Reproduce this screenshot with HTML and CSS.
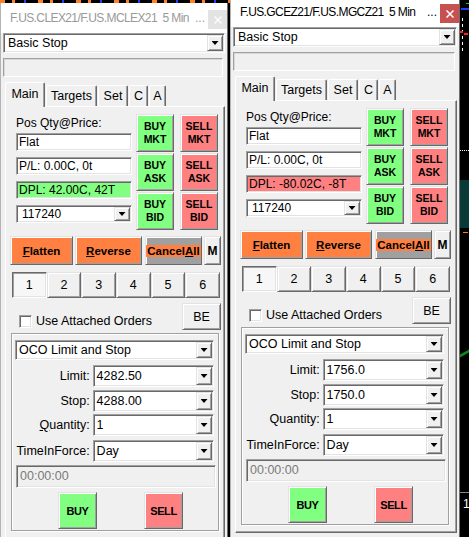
FILE: index.html
```html
<!DOCTYPE html>
<html>
<head>
<meta charset="utf-8">
<link rel="stylesheet" href="styles.css">
</head>
<body>
<div class="desk">
  <div class="chart-top"></div>
  <div class="chart-bit blue"></div>
  <div class="chart-bit wdash"></div>
  <div class="chart-bit red1"></div>
  <div class="chart-bit red2"></div>
  <div class="chart-bit green1"></div>
  <div class="chart-bit wdots"></div>
  <div class="chart-bit teal"></div>
  <div class="chart-bit orange1"></div>
  <div class="chart-bit green2"></div>
  <div class="chart-bit axis"></div>
  <div class="chart-label">1</div>

  <div class="win win-left">
    <div class="titlebar">
      <span class="title">F.US.CLEX21/F.US.MCLEX21  5 Min</span>
      <span class="dots">...</span>
      <span class="close"><svg width="8" height="8" viewBox="0 0 8 8"><path d="M0.5 0.5L7.5 7.5M7.5 0.5L0.5 7.5" stroke="#fff" stroke-width="1.2"/></svg></span>
    </div>
    <div class="combo top-combo"><span class="val">Basic Stop</span><span class="arrow"></span></div>
    <div class="rotext"></div>
    <div class="tabs">
      <div class="tab sel t-main">Main</div>
      <div class="tab t-targets">Targets</div>
      <div class="tab t-set">Set</div>
      <div class="tab t-c">C</div>
      <div class="tab t-a">A</div>
    </div>
    <div class="panel">
      <div class="top">
        <div class="info">
          <div class="lbl">Pos Qty@Price:</div>
          <div class="tbox">Flat</div>
          <div class="tbox">P/L: 0.00C, 0t</div>
          <div class="tbox dpl-pos">DPL: 42.00C, 42T</div>
          <div class="combo acct"><span class="val">117240</span><span class="arrow"></span></div>
        </div>
        <div class="trade">
          <div class="btn buy tbtn">BUY<br>MKT</div>
          <div class="btn sell tbtn">SELL<br>MKT</div>
          <div class="btn buy tbtn">BUY<br>ASK</div>
          <div class="btn sell tbtn">SELL<br>ASK</div>
          <div class="btn buy tbtn">BUY<br>BID</div>
          <div class="btn sell tbtn">SELL<br>BID</div>
        </div>
      </div>
      <div class="actions">
        <div class="btn act orange flatten"><span><u>F</u>latten</span></div>
        <div class="btn act orange reverse"><span><u>R</u>everse</span></div>
        <div class="btn act cancel"><span class="cancel-lbl">Cancel<u>A</u>ll</span></div>
        <div class="btn act mbtn">M</div>
      </div>
      <div class="nums">
        <div class="btn num sel">1</div>
        <div class="btn num">2</div>
        <div class="btn num">3</div>
        <div class="btn num">4</div>
        <div class="btn num">5</div>
        <div class="btn num">6</div>
      </div>
      <div class="attach">
        <span class="check"></span>
        <span class="check-lbl">Use Attached Orders</span>
        <div class="btn be">BE</div>
      </div>
      <div class="group">
        <div class="combo oco"><span class="val">OCO Limit and Stop</span><span class="arrow"></span></div>
        <div class="frow r-limit"><span class="flbl">Limit:</span><div class="combo fcombo"><span class="val">4282.50</span><span class="arrow"></span></div></div>
        <div class="frow r-stop"><span class="flbl">Stop:</span><div class="combo fcombo"><span class="val">4288.00</span><span class="arrow"></span></div></div>
        <div class="frow r-qty"><span class="flbl"><u>Q</u>uantity:</span><div class="combo fcombo"><span class="val">1</span><span class="arrow"></span></div></div>
        <div class="frow r-tif"><span class="flbl">TimeInForce:</span><div class="combo fcombo"><span class="val">Day</span><span class="arrow"></span></div></div>
        <div class="timebox">00:00:00</div>
        <div class="bs">
          <div class="btn buy big">BUY</div>
          <div class="btn sell big">SELL</div>
        </div>
      </div>
    </div>
  </div>

  <div class="win win-right">
    <div class="titlebar">
      <span class="title">F.US.GCEZ21/F.US.MGCZ21  5 Min</span>
      <span class="dots">...</span>
      <span class="close"><svg width="8" height="8" viewBox="0 0 8 8"><path d="M0.5 0.5L7.5 7.5M7.5 0.5L0.5 7.5" stroke="#fff" stroke-width="1.5"/></svg></span>
    </div>
    <div class="combo top-combo"><span class="val">Basic Stop</span><span class="arrow"></span></div>
    <div class="rotext"></div>
    <div class="tabs">
      <div class="tab sel t-main">Main</div>
      <div class="tab t-targets">Targets</div>
      <div class="tab t-set">Set</div>
      <div class="tab t-c">C</div>
      <div class="tab t-a">A</div>
    </div>
    <div class="panel">
      <div class="top">
        <div class="info">
          <div class="lbl">Pos Qty@Price:</div>
          <div class="tbox">Flat</div>
          <div class="tbox">P/L: 0.00C, 0t</div>
          <div class="tbox dpl-neg">DPL: -80.02C, -8T</div>
          <div class="combo acct"><span class="val">117240</span><span class="arrow"></span></div>
        </div>
        <div class="trade">
          <div class="btn buy tbtn">BUY<br>MKT</div>
          <div class="btn sell tbtn">SELL<br>MKT</div>
          <div class="btn buy tbtn">BUY<br>ASK</div>
          <div class="btn sell tbtn">SELL<br>ASK</div>
          <div class="btn buy tbtn">BUY<br>BID</div>
          <div class="btn sell tbtn">SELL<br>BID</div>
        </div>
      </div>
      <div class="actions">
        <div class="btn act orange flatten"><span><u>F</u>latten</span></div>
        <div class="btn act orange reverse"><span><u>R</u>everse</span></div>
        <div class="btn act cancel"><span class="cancel-lbl">Cancel<u>A</u>ll</span></div>
        <div class="btn act mbtn">M</div>
      </div>
      <div class="nums">
        <div class="btn num sel">1</div>
        <div class="btn num">2</div>
        <div class="btn num">3</div>
        <div class="btn num">4</div>
        <div class="btn num">5</div>
        <div class="btn num">6</div>
      </div>
      <div class="attach">
        <span class="check"></span>
        <span class="check-lbl">Use Attached Orders</span>
        <div class="btn be">BE</div>
      </div>
      <div class="group">
        <div class="combo oco"><span class="val">OCO Limit and Stop</span><span class="arrow"></span></div>
        <div class="frow r-limit"><span class="flbl">Limit:</span><div class="combo fcombo"><span class="val">1756.0</span><span class="arrow"></span></div></div>
        <div class="frow r-stop"><span class="flbl">Stop:</span><div class="combo fcombo"><span class="val">1750.0</span><span class="arrow"></span></div></div>
        <div class="frow r-qty"><span class="flbl">Quantity:</span><div class="combo fcombo"><span class="val">1</span><span class="arrow"></span></div></div>
        <div class="frow r-tif"><span class="flbl">TimeInForce:</span><div class="combo fcombo"><span class="val">Day</span><span class="arrow"></span></div></div>
        <div class="timebox">00:00:00</div>
        <div class="bs">
          <div class="btn buy big">BUY</div>
          <div class="btn sell big">SELL</div>
        </div>
      </div>
    </div>
  </div>
</div>
</body>
</html>
```
FILE: styles.css
```css
html, body {
  margin: 0;
  padding: 0;
  background: #000;
}
body {
  font-family: "Liberation Sans", Arial, sans-serif;
  font-size: 12px;
  color: #000;
}
.desk {
  position: relative;
  width: 469px;
  height: 537px;
  overflow: hidden;
  background: #000;
}

/* chart fragments behind the windows */
.chart-top {
  position: absolute;
  left: 0; top: 0;
  width: 230px; height: 3px;
  background: repeating-linear-gradient(90deg, #ff7f27 0 5px, #000 5px 12px, #ff7f27 12px 15px, #000 15px 24px, #2a3cff 24px 26px, #000 26px 38px);
}
.chart-bit { position: absolute; }
.blue { left: 461px; top: 8px; width: 8px; height: 2px; background: #2040ff; }
.wdash { left: 462px; top: 18px; width: 1px; height: 34px; background: repeating-linear-gradient(180deg, #fff 0 3px, #000 3px 6px); }
.red1 { left: 460px; top: 31px; width: 3px; height: 2px; background: #ff2020; }
.red2 { left: 464px; top: 33px; width: 4px; height: 2px; background: #ff2020; }
.green1 { left: 466px; top: 3px; width: 3px; height: 1px; background: #20c020; }
.wdots { left: 460px; top: 150px; width: 9px; height: 1px; background: repeating-linear-gradient(90deg, #fff 0 1px, #000 1px 2px); }
.teal { left: 460px; top: 180px; width: 9px; height: 48px; background: #0a3a38; }
.orange1 { left: 463px; top: 232px; width: 5px; height: 1px; background: #ff8000; }
.green2 { left: 460px; top: 352px; width: 9px; height: 3px; background: #0a8a1a; transform: skewY(-30deg); }
.axis { left: 460px; top: 492px; width: 9px; height: 1px; background: #888; }
.chart-label {
  position: absolute;
  left: 463px; top: 497px;
  color: #fff;
  font-size: 12px;
  line-height: 14px;
}

/* windows */
.win {
  position: absolute;
  height: 540px;
  box-sizing: border-box;
  background: #f0f0f0;
  border-left: 1px solid #b4b4b4;
  border-right: 1px solid #6e6e6e;
}
.win-left { left: 0; top: 3px; width: 228px; }
.win-right { left: 230px; top: -3px; width: 230px; }

.titlebar {
  height: 30px;
  background: #fff;
  display: flex;
  align-items: center;
  padding-left: 9px;
  box-sizing: border-box;
}
.title {
  font-size: 12px;
  letter-spacing: -0.6px;
  white-space: pre;
  color: #000;
}
.dots {
  margin-left: auto;
  margin-right: 3px;
  font-size: 12px;
  color: #000;
}
.win-left .title, .win-left .dots { color: #999; }
.close {
  width: 19px;
  height: 19px;
  margin-top: 3px;
  background: #c75050;
  display: flex;
  align-items: center;
  justify-content: center;
}
.win-left .close { background: #e3e3e3; }

/* sunken field */
.combo, .tbox, .rotext, .timebox, .check {
  box-sizing: border-box;
  border: 1px solid;
  border-color: #a0a0a0 #fff #fff #a0a0a0;
  box-shadow: inset 1px 1px #696969, inset -1px -1px #e3e3e3;
}
.combo {
  display: flex;
  align-items: center;
  background: #fff;
  padding: 1px;
}
.combo .val {
  flex: 1;
  padding-left: 2px;
  white-space: nowrap;
  overflow: hidden;
}
.combo .arrow {
  width: 16px;
  align-self: stretch;
  box-sizing: border-box;
  background: #f0f0f0;
  border: 1px solid;
  border-color: #e3e3e3 #696969 #696969 #e3e3e3;
  box-shadow: inset 1px 1px #fff, inset -1px -1px #a0a0a0;
  display: flex;
  align-items: center;
  justify-content: center;
}
.combo .arrow::after {
  content: "";
  width: 7px;
  height: 4px;
  background: #000;
  clip-path: polygon(0 0, 100% 0, 50% 100%);
}
.top-combo {
  height: 20px;
  margin: 0 2px 0 2px;
  font-size: 12.5px;
}
.top-combo .val { padding-left: 3px; }
.rotext {
  height: 19px;
  margin: 5px 4px 0 2px;
  background: #f0f0f0;
  box-shadow: inset 1px 1px #d8d8d8;
}

/* tabs */
.tabs {
  display: flex;
  align-items: flex-end;
  height: 24px;
  margin: 5px 0 0 4px;
  position: relative;
  z-index: 1;
}
.tab {
  height: 21px;
  box-sizing: border-box;
  border: 1px solid;
  border-bottom: none;
  border-color: #fff #696969 transparent #fff;
  box-shadow: inset -1px 0 #a0a0a0;
  border-radius: 2px 2px 0 0;
  text-align: center;
  line-height: 20px;
  font-size: 12.5px;
  margin-left: 1px;
  background: #f0f0f0;
}
.tab.sel {
  height: 25px;
  margin-bottom: -1px;
  margin-left: 0;
  line-height: 22px;
}
.t-main { width: 40px; }
.t-targets { width: 51px; }
.t-set { width: 30px; }
.t-c { width: 19px; }
.t-a { width: 17px; }

.panel {
  margin-left: 4px;
  width: 220px;
  height: 433px;
  box-sizing: border-box;
  border: 1px solid;
  border-color: #fff #696969 #696969 #fff;
  box-shadow: inset -1px -1px #a0a0a0;
}
.win-right .panel { width: 222px; }

/* raised button */
.btn {
  box-sizing: border-box;
  border: 1px solid;
  border-color: #e3e3e3 #696969 #696969 #e3e3e3;
  box-shadow: inset 1px 1px #fff, inset -1px -1px #a0a0a0;
  background: #f0f0f0;
  display: flex;
  align-items: center;
  justify-content: center;
  text-align: center;
}
.buy { background: #80ff80; }
.sell { background: #ff8080; }

.top {
  display: flex;
  margin: 7px 0 0 10px;
}
.info {
  width: 116px;
  display: flex;
  flex-direction: column;
}
.lbl {
  height: 19px;
  line-height: 19px;
  white-space: nowrap;
}
.tbox {
  height: 18px;
  margin-bottom: 6px;
  background: #fff;
  padding-left: 2px;
  line-height: 16px;
  white-space: nowrap;
  overflow: hidden;
}
.dpl-pos { background: #80ff80; }
.dpl-neg { background: #ff8080; }
.acct { height: 18px; }
.acct .val { padding-left: 4px; }

.trade {
  display: grid;
  grid-template-columns: 38px 38px;
  grid-auto-rows: 38px;
  column-gap: 6px;
  row-gap: 1px;
  margin-left: 4px;
}
.tbtn {
  font-weight: bold;
  font-size: 10.5px;
  line-height: 13px;
}

.actions {
  display: flex;
  height: 29px;
  margin: 6px 0 0 4px;
}
.act {
  font-weight: bold;
  font-size: 11.5px;
}
.orange { background: #ff8040; }
.flatten { width: 63px; }
.reverse { width: 67px; margin-left: 2px; }
.cancel { width: 57px; margin-left: 3px; background: #a0a0a0; }
.cancel-lbl {
  background: #ff8040;
  line-height: 12px;
  padding: 0 1px;
}
.mbtn { width: 17px; margin-left: 2px; font-size: 12px; }

.nums {
  display: grid;
  grid-template-columns: repeat(6, 1fr);
  width: 208px;
  height: 26px;
  margin: 7px 0 0 6px;
}
.num { font-size: 12.5px; }
.num.sel {
  border-color: #696969 #fff #fff #696969;
  box-shadow: inset 1px 1px #a0a0a0, inset -1px -1px #e3e3e3;
  background: #f7f7f7;
}

.attach {
  display: flex;
  align-items: flex-end;
  width: 215px;
  height: 27px;
  margin-top: 5px;
}
.check {
  width: 13px;
  height: 13px;
  margin: 0 0 2px 13px;
  background: #fff;
}
.check-lbl {
  margin: 0 0 2px 4px;
  line-height: 14px;
  font-size: 12.5px;
  white-space: nowrap;
}
.be {
  margin-left: auto;
  width: 39px;
  height: 27px;
  font-size: 12.5px;
}

.group {
  margin: 3px 0 0 5px;
  width: 208px;
  height: 198px;
  box-sizing: border-box;
  border: 1px solid #a0a0a0;
  box-shadow: inset 1px 1px #fff, 1px 1px #fff;
  padding: 6px 4px 0 3px;
}
.oco { height: 20px; font-size: 12.5px; }
.frow {
  display: flex;
  align-items: center;
  height: 22px;
}
.r-limit { margin-top: 5px; }
.r-stop { margin-top: 3px; }
.r-qty { margin-top: 2px; }
.r-tif { margin-top: 4px; }
.flbl {
  width: 78px;
  padding-right: 3px;
  box-sizing: border-box;
  text-align: right;
  white-space: nowrap;
  font-size: 12.5px;
}
.fcombo {
  width: 122px;
  height: 22px;
  font-size: 12.5px;
}
.timebox {
  width: 200px;
  height: 23px;
  margin: 3px 0 0 1px;
  background: #f0f0f0;
  color: #7a7a7a;
  padding-left: 3px;
  line-height: 21px;
  font-size: 12.5px;
}
.bs {
  display: flex;
  margin-top: 4px;
}
.big {
  width: 39px;
  height: 37px;
  font-weight: bold;
  font-size: 11px;
  letter-spacing: -0.4px;
}
.bs .buy { margin-left: 43px; }
.bs .sell { margin-left: 47px; }
```
